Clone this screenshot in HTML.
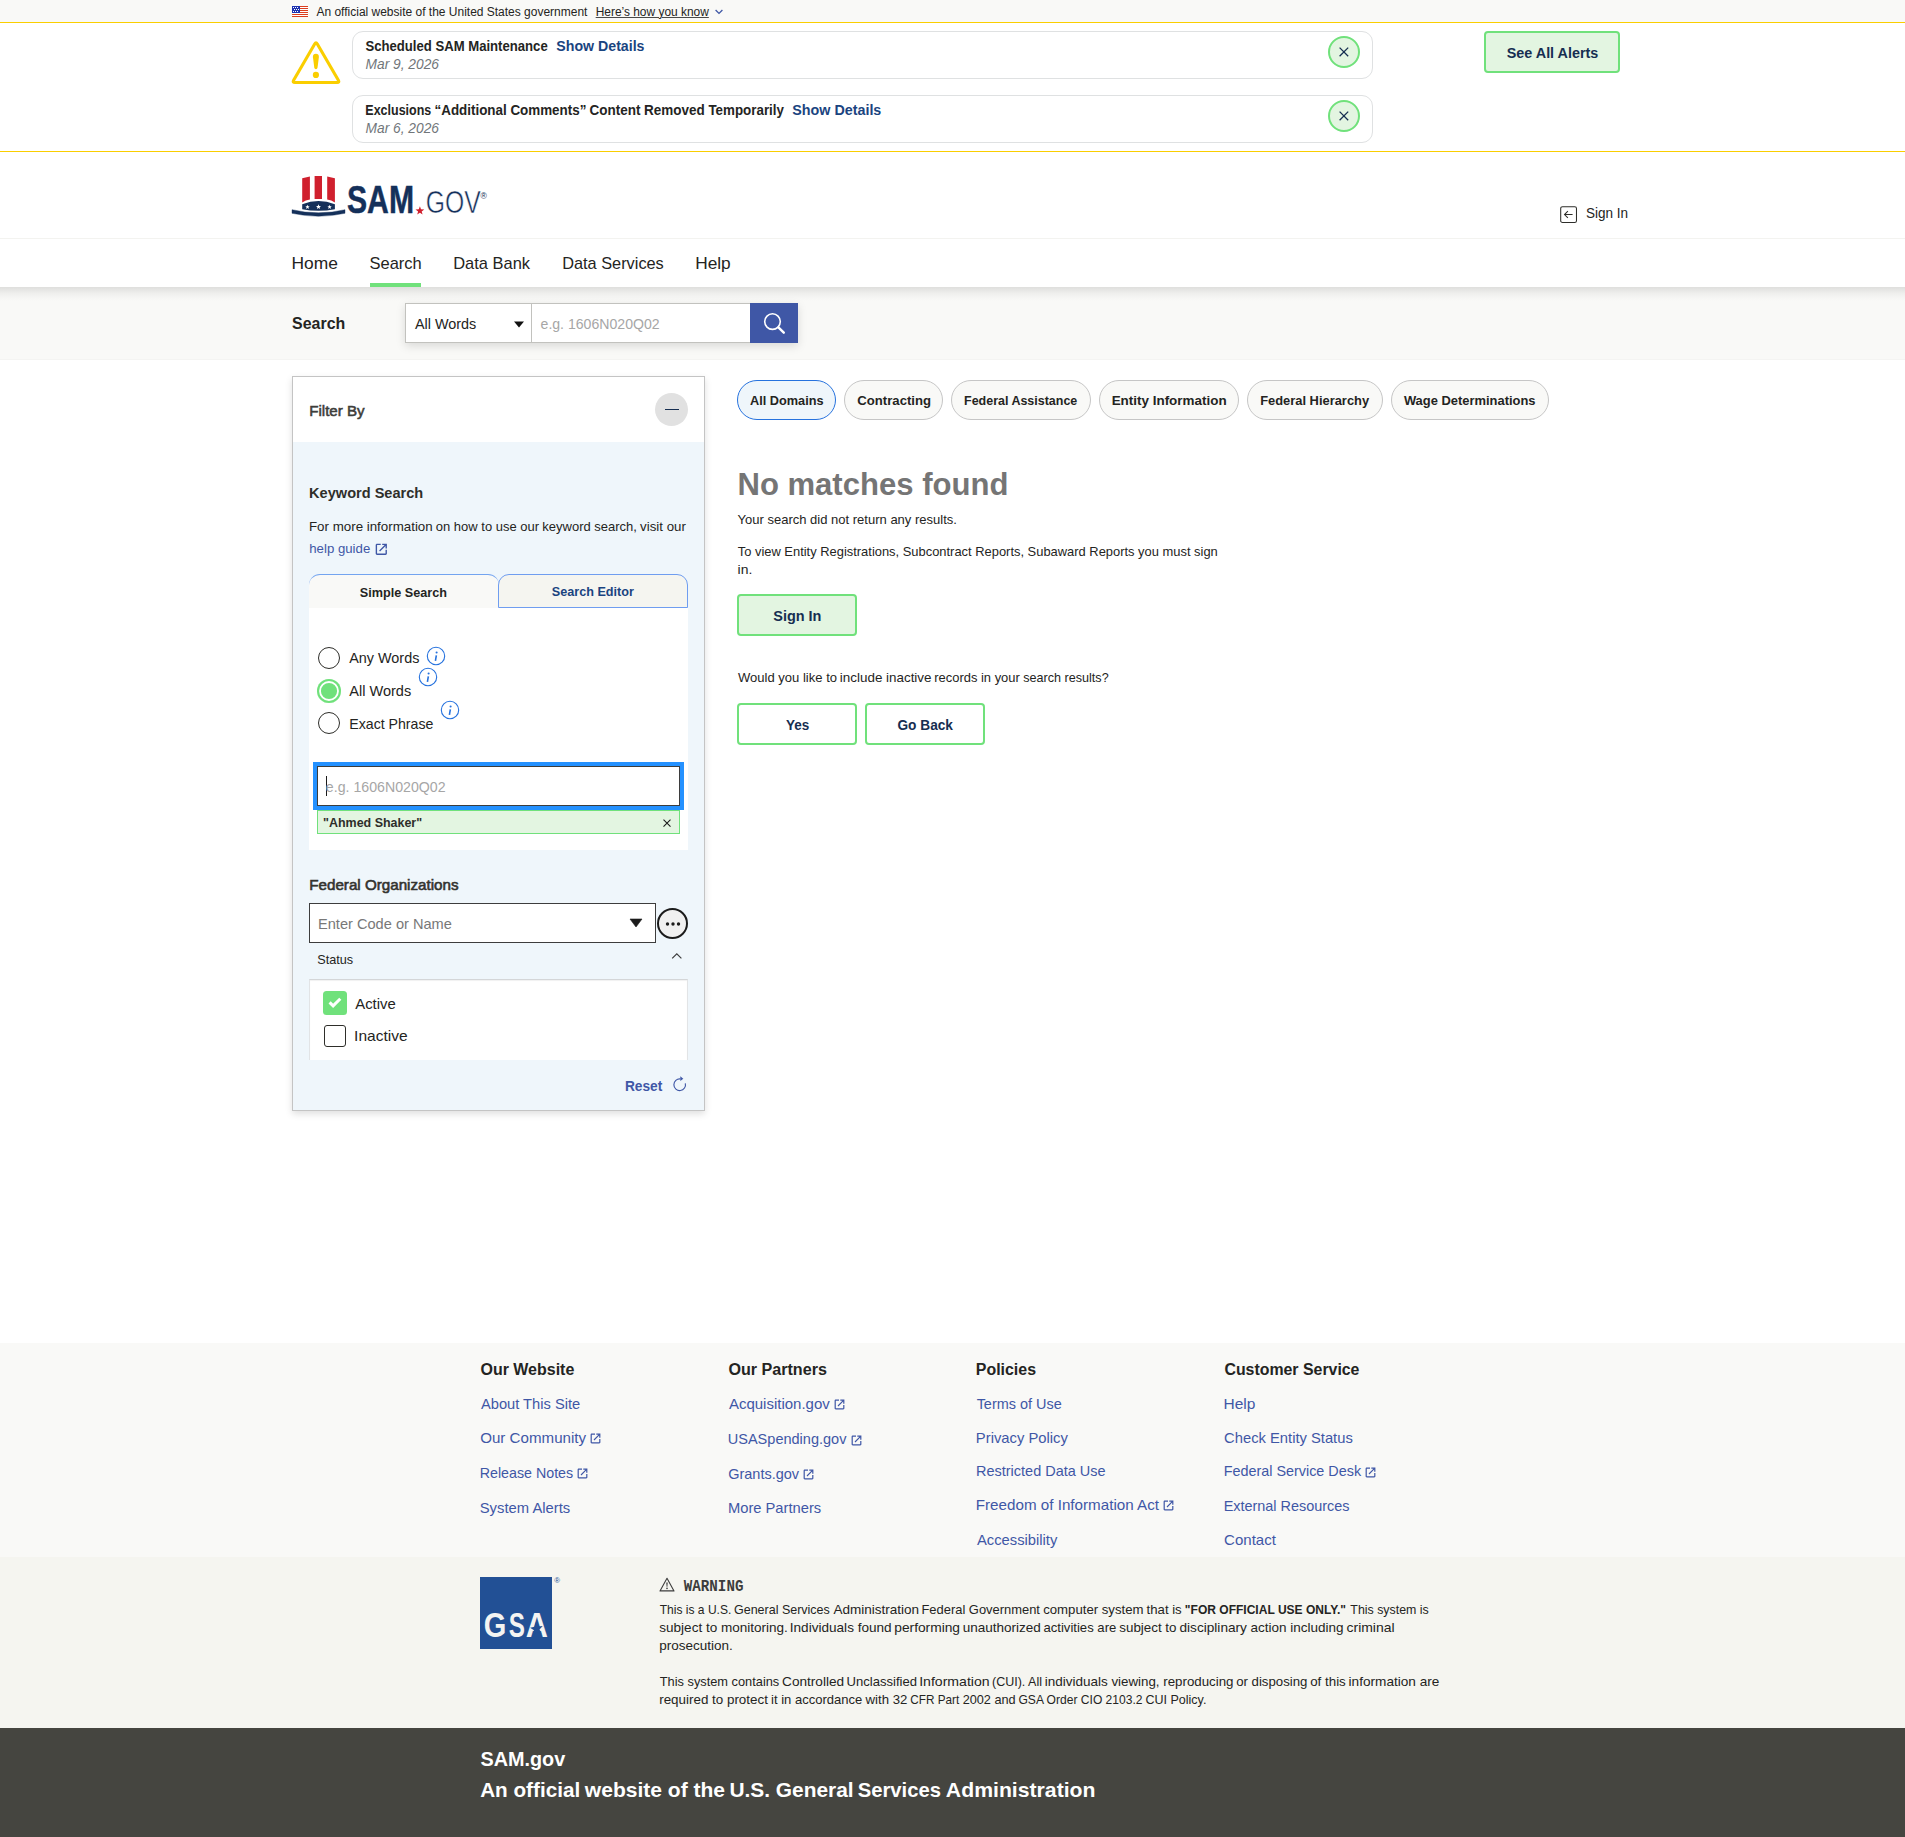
<!DOCTYPE html>
<html lang="en">
<head>
<meta charset="utf-8">
<title>SAM.gov | Search</title>
<meta name="viewport" content="width=1905">
<style>
html,body{margin:0;padding:0;background:#fff;}
body{width:1905px;height:1837px;overflow:hidden;position:relative;font-family:"Liberation Sans",sans-serif;color:#242422;}
#page{position:absolute;left:0;top:0;width:1905px;height:1837px;overflow:hidden;background:#fff;}
#page section,#page header,#page nav,#page form,#page aside,#page main,#page footer{display:block;margin:0;padding:0;border:0;}
#page .ln{display:block;margin:0;padding:0;font-weight:400;}
#page div,#page svg,#page .t{position:absolute;box-sizing:border-box;display:block;margin:0;padding:0;}
#page svg{overflow:visible;}
.t{white-space:nowrap;line-height:1;transform-origin:0 0;font-family:"Liberation Sans",sans-serif;font-weight:400;font-style:normal;color:#242422;text-decoration:none;cursor:default;}
</style>
</head>
<body>
<div id="page">
<section class="usa-banner" aria-label="Official website of the United States government">
<div style="left:0px;top:0px;width:1905px;height:22px;background:#f9f9f7;"></div>
<svg style="left:292px;top:6px;shape-rendering:crispEdges;" width="16" height="11" viewBox="0 0 16 11" aria-hidden="true"><rect width="16" height="11" fill="#fff"/><rect y="0" width="16" height="1" fill="#db3e1f"/><rect y="2" width="16" height="1" fill="#db3e1f"/><rect y="4" width="16" height="1" fill="#db3e1f"/><rect y="6" width="16" height="1" fill="#db3e1f"/><rect y="8" width="16" height="1" fill="#db3e1f"/><rect y="10" width="16" height="1" fill="#db3e1f"/><rect width="8" height="7" fill="#1e33b1"/><rect x="1.1" y="1.2" width="0.8" height="0.8" fill="#fff"/><rect x="2.0" y="3.2" width="0.8" height="0.8" fill="#fff"/><rect x="1.1" y="5.2" width="0.8" height="0.8" fill="#fff"/><rect x="3.1" y="1.2" width="0.8" height="0.8" fill="#fff"/><rect x="4.0" y="3.2" width="0.8" height="0.8" fill="#fff"/><rect x="3.1" y="5.2" width="0.8" height="0.8" fill="#fff"/><rect x="5.1" y="1.2" width="0.8" height="0.8" fill="#fff"/><rect x="6.0" y="3.2" width="0.8" height="0.8" fill="#fff"/><rect x="5.1" y="5.2" width="0.8" height="0.8" fill="#fff"/></svg>
<svg style="left:714px;top:8.4px;" width="10" height="8" viewBox="0 0 10 8" aria-hidden="true"><path d="M1.6 2l3.4 3.4L8.4 2" fill="none" stroke="#3f57a6" stroke-width="1.3"/></svg>
<span class="t" style="left:316px;top:6px;font-size:12px;transform:translateX(0.47px) scaleX(0.9987);">An official website of the United States government</span>
<a href="#" class="t" style="left:595px;top:6px;font-size:12px;text-decoration:underline;text-underline-offset:1px;text-decoration-thickness:1px;text-decoration-color:#4a4a48;transform:translateX(0.67px) scaleX(0.9940);">Here’s how you know</a>
</section>
<section class="alerts" aria-label="System alerts">
<div style="left:0px;top:22px;width:1905px;height:130px;background:#fff;border-top:1px solid #face00;border-bottom:1px solid #face00;"></div>
<svg style="left:292px;top:40px;" width="48" height="46" viewBox="0 0 48 46" aria-hidden="true"><path d="M22.69 4 Q24 1.75 25.31 4 L46.39 40.2 Q47.7 42.45 45.1 42.45 L2.9 42.45 Q0.3 42.45 1.61 40.2 Z" fill="none" stroke="#face00" stroke-width="3.1" stroke-linejoin="round"/><path d="M20.9 17 Q20.9 13.8 23.9 13.8 Q26.9 13.8 26.9 17 L25.5 27.8 Q25.3 29.2 23.9 29.2 Q22.5 29.2 22.3 27.8 Z" fill="#face00"/><circle cx="23.9" cy="34.9" r="3.1" fill="#face00"/></svg>
<div style="left:352px;top:31px;width:1021px;height:48px;border:1px solid #dfe1e2;border-radius:11px;background:#fff;"></div>
<div style="left:1328px;top:36px;width:32px;height:32px;border:2px solid #70e17b;border-radius:50%;background:#e3f5e1;"></div>
<svg style="left:1336px;top:44px;" width="16" height="16" viewBox="0 0 16 16" aria-hidden="true"><path d="M3.6 3.6l8.6 8.6M12.2 3.6l-8.6 8.6" stroke="#162e51" stroke-width="1.3" fill="none"/></svg>
<div style="left:352px;top:95px;width:1021px;height:48px;border:1px solid #dfe1e2;border-radius:11px;background:#fff;"></div>
<div style="left:1328px;top:100px;width:32px;height:32px;border:2px solid #70e17b;border-radius:50%;background:#e3f5e1;"></div>
<svg style="left:1336px;top:108px;" width="16" height="16" viewBox="0 0 16 16" aria-hidden="true"><path d="M3.6 3.6l8.6 8.6M12.2 3.6l-8.6 8.6" stroke="#162e51" stroke-width="1.3" fill="none"/></svg>
<div style="left:1484px;top:31px;width:136px;height:42px;border:2px solid #70e17b;border-radius:4px;background:#e3f5e1;"></div>
<strong class="t" style="left:365px;top:38px;font-size:15px;font-weight:700;transform:translateX(0.40px) scaleX(0.8749);">Scheduled SAM Maintenance</strong>
<a href="#" class="t" style="left:556px;top:38px;font-size:15px;font-weight:700;color:#1a4480;transform:translateX(0.31px) scaleX(0.9444);">Show Details</a>
<em class="t" style="left:365px;top:56px;font-size:15px;font-style:italic;color:#71767a;transform:translateX(0.55px) scaleX(0.9172);">Mar 9, 2026</em>
<strong class="ln">
<span class="t" style="left:365px;top:102px;font-size:15px;font-weight:700;transform:translateX(0.36px) scaleX(0.8313);">Exclusions</span>
<span class="t" style="left:434px;top:102px;font-size:15px;font-weight:700;transform:translateX(0.51px) scaleX(0.8931);">“Additional Comments”</span>
<span class="t" style="left:589px;top:102px;font-size:15px;font-weight:700;transform:translateX(0.45px) scaleX(0.8989);">Content Removed</span>
<span class="t" style="left:708px;top:102px;font-size:15px;font-weight:700;transform:translateX(0.45px) scaleX(0.8907);">Temporarily</span>
</strong>
<a href="#" class="t" style="left:792px;top:102px;font-size:15px;font-weight:700;color:#1a4480;transform:translateX(0.31px) scaleX(0.9533);">Show Details</a>
<em class="t" style="left:365px;top:120px;font-size:15px;font-style:italic;color:#71767a;transform:translateX(0.55px) scaleX(0.9172);">Mar 6, 2026</em>
<b class="t" style="left:1506px;top:45px;font-size:15px;font-weight:700;color:#162e51;transform:translateX(0.73px) scaleX(0.9579);">See All Alerts</b>
</section>
<header class="site-header">
<div style="left:0px;top:238px;width:1905px;height:1px;background:#f3f3f0;"></div>
<svg style="left:290px;top:174px" width="200" height="44" viewBox="290 174 200 44" role="img" aria-label="SAM.gov">
<path d="M302.2 178.2 L309.9 176.6 V199.6 Q305.6 200.4 302.2 202.4 Z" fill="#d0202e"/>
<path d="M314.6 176 H322 V199 Q318.3 198.8 314.6 199 Z" fill="#d0202e"/>
<path d="M327.2 176.6 L334.9 178.2 V202.4 Q331.5 200.4 327.2 199.6 Z" fill="#d0202e"/>
<path d="M302.2 204.2 Q318.5 197.6 334.9 204.2 V209.2 Q318.5 212.2 302.2 209.2 Z" fill="#14305a"/>
<path d="M292 209.7 Q318.5 216 345 209.7 V213.3 Q318.5 219.2 292 213.3 Z" fill="#14305a" stroke="#14305a" stroke-width="0.4" stroke-linejoin="round"/>
<g fill="#fff">
<path d="M307.5 204.7l.6 1.5 1.6.1-1.2 1 .4 1.6-1.4-.9-1.4.9.4-1.6-1.2-1 1.6-.1z"/>
<path d="M318.5 204.3l.7 1.7 1.8.1-1.4 1.1.5 1.8-1.6-1-1.6 1 .5-1.8-1.4-1.1 1.8-.1z"/>
<path d="M329.6 204.7l.6 1.5 1.6.1-1.2 1 .4 1.6-1.4-.9-1.4.9.4-1.6-1.2-1 1.6-.1z"/>
</g>
<text x="347" y="212.9" font-family="'Liberation Sans', sans-serif" font-weight="700" font-size="39.2" fill="#14305a" stroke="#14305a" stroke-width="0.5" textLength="67" lengthAdjust="spacingAndGlyphs">SAM</text>
<path d="M419.9 206.2l1.1 3.1 3.3.1-2.6 2 .9 3.2-2.7-1.9-2.7 1.9.9-3.2-2.6-2 3.3-.1z" fill="#d0202e"/>
<text x="425.8" y="212.9" font-family="'Liberation Sans', sans-serif" font-weight="400" font-size="31" fill="#14305a" stroke="#fff" stroke-width="0.55" textLength="55" lengthAdjust="spacingAndGlyphs">GOV</text>
<text x="480.5" y="199.1" font-family="'Liberation Sans', sans-serif" font-size="8.6" fill="#14305a">®</text>
</svg>
<svg style="left:1560px;top:206px;" width="17.2" height="17.2" viewBox="0 0 17.2 17.2" aria-hidden="true"><rect x="0.7" y="0.7" width="15.8" height="15.8" rx="1.8" fill="none" stroke="#2e2e2a" stroke-width="1.05"/><path d="M12.6 8.6H4.6M7.9 5.2L4.5 8.6l3.4 3.4" fill="none" stroke="#2e2e2a" stroke-width="1.05"/></svg>
<a href="#" class="t" style="left:1585px;top:205px;font-size:15px;transform:translateX(0.90px) scaleX(0.9000);">Sign In</a>
</header>
<nav class="primary-nav" aria-label="Primary navigation">
<div style="left:370px;top:283px;width:51px;height:4px;background:#70e17b;"></div>
<a href="#" class="t" style="left:291px;top:255px;font-size:17px;transform:translateX(0.43px) scaleX(1.0227);">Home</a>
<a href="#" class="t" style="left:369px;top:255px;font-size:17px;transform:translateX(0.52px) scaleX(0.9701);">Search</a>
<a href="#" class="t" style="left:453px;top:255px;font-size:17px;transform:translateX(0.19px) scaleX(0.9679);">Data Bank</a>
<a href="#" class="t" style="left:562px;top:255px;font-size:17px;transform:translateX(0.23px) scaleX(0.9596);">Data Services</a>
<a href="#" class="t" style="left:695px;top:255px;font-size:17px;transform:translateX(0.18px) scaleX(1.0166);">Help</a>
</nav>
<form class="search-bar" role="search">
<div style="left:0px;top:287px;width:1905px;height:73px;background:#f9f9f7;border-bottom:1px solid #f4f4f2;"></div>
<div style="left:0px;top:287px;width:1905px;height:14px;background:linear-gradient(rgba(0,0,0,.105),rgba(0,0,0,.085) 15%,rgba(0,0,0,.045) 45%,rgba(0,0,0,.015) 75%,rgba(0,0,0,0));"></div>
<div style="left:405px;top:303px;width:393px;height:40px;box-shadow:0 3px 9px rgba(0,0,0,.13);background:#fff;"></div>
<div style="left:405px;top:303px;width:127px;height:40px;border:1px solid #c2c2be;background:#fff;"></div>
<div style="left:531px;top:303px;width:220px;height:40px;border:1px solid #c2c2be;background:#fff;"></div>
<svg style="left:513px;top:320px;" width="12" height="9" viewBox="0 0 12 9" aria-hidden="true"><path d="M1 1.4h10L6 7.4z" fill="#111"/></svg>
<div style="left:750px;top:303px;width:48px;height:40px;background:#3f57a6;"></div>
<svg style="left:762px;top:312px;" width="24" height="24" viewBox="0 0 24 24" aria-hidden="true"><circle cx="10.5" cy="9.6" r="7.8" fill="none" stroke="#fff" stroke-width="1.6"/><path d="M16.4 15.4l5.4 5.3" stroke="#fff" stroke-width="2.4" stroke-linecap="round" fill="none"/></svg>
<span class="t" style="left:292px;top:315px;font-size:17px;font-weight:700;transform:translateX(0.11px) scaleX(0.9365);">Search</span>
<label class="t" style="left:414px;top:316px;font-size:15px;transform:translateX(0.93px) scaleX(0.9597);">All Words</label>
<span class="t" style="left:540px;top:316px;font-size:15px;color:#a6a6a6;transform:translateX(0.54px) scaleX(0.9392);">e.g. 1606N020Q02</span>
</form>
<aside class="filter-panel" aria-label="Filter By">
<div style="left:292px;top:376px;width:413px;height:735px;border:1px solid #c4c4c4;background:#eff6fb;box-shadow:0 3px 7px rgba(0,0,0,.13);"></div>
<div style="left:293px;top:377px;width:411px;height:65px;background:#fff;"></div>
<div style="left:655px;top:393px;width:33px;height:33px;border-radius:50%;background:#e1e1e1;"></div>
<div style="left:665px;top:409px;width:14px;height:1.3px;background:#162e51;"></div>
<svg style="left:375.2px;top:542.6px;" width="12.6" height="12.6" viewBox="0 0 11 11" aria-hidden="true"><path d="M9.2 9.2H1.8V1.8H5V0.6H1.8C1.1 0.6 0.6 1.1 0.6 1.8v7.4c0 .7.5 1.2 1.2 1.2h7.4c.7 0 1.2-.5 1.2-1.2V6H9.2v3.2z" fill="#3f57a6"/><path d="M6.3 0.6v1.2h2.1L3.6 6.6l.8.8 4.8-4.8v2.1h1.2V0.6H6.3z" fill="#3f57a6"/></svg>
<div style="left:309px;top:574px;width:190px;height:34px;background:#f9f9f7;border-top:1px solid #73a4f0;border-radius:11px 11px 0 0;"></div>
<div style="left:498px;top:574px;width:190px;height:34px;background:#f5f5f0;border:1px solid #6f9df0;border-radius:11px 11px 0 0;"></div>
<div style="left:309px;top:608px;width:379px;height:242px;background:#fff;"></div>
<div style="left:318px;top:647px;width:22px;height:22px;border-radius:50%;background:#fff;border:1.5px solid #2e2e2a;"></div>
<div style="left:317px;top:679px;width:24px;height:24px;border-radius:50%;background:#70e17b;box-shadow:inset 0 0 0 2.1px #70e17b, inset 0 0 0 3.9px #fff;"></div>
<div style="left:318px;top:712px;width:22px;height:22px;border-radius:50%;background:#fff;border:1.5px solid #2e2e2a;"></div>
<svg style="left:426.2px;top:646px;" width="20" height="20" viewBox="0 0 20 20" aria-hidden="true"><circle cx="10" cy="10" r="8.7" fill="none" stroke="#2672de" stroke-width="1.1"/><circle cx="10.6" cy="6.5" r="1.05" fill="#2672de"/><path d="M10.35 9.3L9.4 14.8" fill="none" stroke="#2672de" stroke-width="1.6"/></svg>
<svg style="left:418.2px;top:667px;" width="20" height="20" viewBox="0 0 20 20" aria-hidden="true"><circle cx="10" cy="10" r="8.7" fill="none" stroke="#2672de" stroke-width="1.1"/><circle cx="10.6" cy="6.5" r="1.05" fill="#2672de"/><path d="M10.35 9.3L9.4 14.8" fill="none" stroke="#2672de" stroke-width="1.6"/></svg>
<svg style="left:440.2px;top:700.4px;" width="20" height="20" viewBox="0 0 20 20" aria-hidden="true"><circle cx="10" cy="10" r="8.7" fill="none" stroke="#2672de" stroke-width="1.1"/><circle cx="10.6" cy="6.5" r="1.05" fill="#2672de"/><path d="M10.35 9.3L9.4 14.8" fill="none" stroke="#2672de" stroke-width="1.6"/></svg>
<div style="left:313px;top:762px;width:371px;height:48px;background:#2491ff;"></div>
<div style="left:317px;top:766px;width:363px;height:40px;background:#fff;border:1px solid #3d3d3d;"></div>
<div style="left:326px;top:776px;width:1px;height:20px;background:#1b1b1b;"></div>
<div style="left:317px;top:810px;width:363px;height:24px;background:#e3f5e1;border:1px solid #70e17b;"></div>
<svg style="left:661px;top:817px;" width="12" height="12" viewBox="0 0 12 12" aria-hidden="true"><path d="M2.5 2.6l7 7M9.5 2.6l-7 7" stroke="#1b1b1b" stroke-width="1.1" fill="none"/></svg>
<div style="left:309px;top:903px;width:347px;height:40px;background:#fff;border:1px solid #3d3d3d;"></div>
<svg style="left:629px;top:918px;" width="14" height="10" viewBox="0 0 14 10" aria-hidden="true"><path d="M1 1h12L7 9z" fill="#1b1b1b" stroke="#1b1b1b" stroke-width="0.6" stroke-linejoin="round"/></svg>
<div style="left:657px;top:907.5px;width:31px;height:31px;border-radius:50%;background:#f0f0f0;border:2px solid #1b1b1b;"></div>
<svg style="left:664px;top:920px;" width="18" height="8" viewBox="0 0 18 8" aria-hidden="true"><circle cx="3.5" cy="4" r="1.7" fill="#1b1b1b"/><circle cx="9" cy="4" r="1.7" fill="#1b1b1b"/><circle cx="14.5" cy="4" r="1.7" fill="#1b1b1b"/></svg>
<svg style="left:670px;top:950px;" width="14" height="11" viewBox="0 0 14 11" aria-hidden="true"><path d="M2.2 8.4l4.6-4.6 4.6 4.6" fill="none" stroke="#3d3d3d" stroke-width="1.2"/></svg>
<div style="left:309px;top:979px;width:379px;height:81px;background:#fff;border:1px solid #e2e4e6;border-top-color:#d4d6d8;border-bottom:0;box-shadow:inset 0 1px 1px rgba(0,0,0,.06);"></div>
<div style="left:323px;top:991px;width:24px;height:24px;background:#70e17b;border-radius:3.5px;"></div>
<svg style="left:323px;top:991px;" width="24" height="24" viewBox="0 0 24 24" aria-hidden="true"><path d="M6.6 11.4l3.5 3.5 7.2-7.2" fill="none" stroke="#fff" stroke-width="3"/></svg>
<div style="left:324px;top:1025px;width:22px;height:22px;background:#fff;border:1.5px solid #2e2e2a;border-radius:3px;"></div>
<svg style="left:672px;top:1076px;" width="16" height="16" viewBox="0 0 16 16" aria-hidden="true"><path d="M13.3 7.3A5.8 5.8 0 1 1 8.4 3" fill="none" stroke="#3f57a6" stroke-width="1.15"/><path d="M8.3 0.2l3 2.5-3 2.4z" fill="#3f57a6"/></svg>
<h2 class="t" style="left:309px;top:403px;font-size:15px;color:#3d3d3a;-webkit-text-stroke:0.55px #3d3d3a;transform:translateX(0.18px) scaleX(1.0090);">Filter By</h2>
<h2 class="t" style="left:309px;top:485px;font-size:15px;font-weight:700;color:#2e2e2a;transform:translateX(0.11px) scaleX(0.9705);">Keyword Search</h2>
<p class="ln">
<span class="t" style="left:308px;top:520px;font-size:13.3px;transform:translateX(0.97px) scaleX(1.0026);">For more information</span>
<span class="t" style="left:435px;top:520px;font-size:13.3px;transform:translateX(0.82px) scaleX(0.9764);">on how to use our</span>
<span class="t" style="left:542px;top:520px;font-size:13.3px;transform:translateX(0.33px) scaleX(0.9775);">keyword search,</span>
<span class="t" style="left:640px;top:520px;font-size:13.3px;transform:translateX(0.12px) scaleX(0.9975);">visit our</span>
</p>
<a href="#" class="t" style="left:309px;top:542px;font-size:13.3px;color:#3f57a6;transform:translateX(0.25px) scaleX(0.9936);">help guide</a>
<b class="t" style="left:359px;top:586px;font-size:13.6px;font-weight:700;transform:translateX(0.77px) scaleX(0.9299);">Simple Search</b>
<b class="t" style="left:551px;top:585px;font-size:13.6px;font-weight:700;color:#1a4480;transform:translateX(0.77px) scaleX(0.9293);">Search Editor</b>
<label class="t" style="left:349px;top:650px;font-size:15px;transform:translateX(0.26px) scaleX(0.9587);">Any Words</label>
<label class="t" style="left:349px;top:683px;font-size:15px;transform:translateX(0.26px) scaleX(0.9689);">All Words</label>
<label class="t" style="left:349px;top:716px;font-size:15px;transform:translateX(0.27px) scaleX(0.9429);">Exact Phrase</label>
<span class="t" style="left:325px;top:779px;font-size:15px;color:#a6a6a6;transform:translateX(0.82px) scaleX(0.9448);">e.g. 1606N020Q02</span>
<span class="t" style="left:323px;top:816px;font-size:13.6px;font-weight:700;color:#2e2e2a;transform:translateX(0.02px) scaleX(0.9169);">"Ahmed Shaker"</span>
<h2 class="t" style="left:309px;top:877px;font-size:15px;color:#33332f;-webkit-text-stroke:0.6px #33332f;transform:translateX(0.25px) scaleX(1.0115);">Federal Organizations</h2>
<span class="t" style="left:317px;top:916px;font-size:15px;color:#787878;transform:translateX(0.98px) scaleX(0.9733);">Enter Code or Name</span>
<label class="t" style="left:317px;top:953px;font-size:13.3px;transform:translateX(0.29px) scaleX(0.9526);">Status</label>
<label class="t" style="left:355px;top:996px;font-size:15px;transform:translateX(0.25px) scaleX(0.9917);">Active</label>
<label class="t" style="left:354px;top:1028px;font-size:15px;transform:translateX(0.11px) scaleX(1.0349);">Inactive</label>
<a href="#" class="t" style="left:624px;top:1078px;font-size:15px;font-weight:700;color:#3f57a6;transform:translateX(0.90px) scaleX(0.9164);">Reset</a>
</aside>
<main class="results">
<div style="left:737px;top:380px;width:99px;height:40px;border:1px solid #2672de;background:#eff6fb;border-radius:20px;"></div>
<div style="left:844px;top:380px;width:99px;height:40px;border:1px solid #c6c6c6;background:#f9f9f7;border-radius:20px;"></div>
<div style="left:951px;top:380px;width:140px;height:40px;border:1px solid #c6c6c6;background:#f9f9f7;border-radius:20px;"></div>
<div style="left:1099px;top:380px;width:140px;height:40px;border:1px solid #c6c6c6;background:#f9f9f7;border-radius:20px;"></div>
<div style="left:1247px;top:380px;width:136px;height:40px;border:1px solid #c6c6c6;background:#f9f9f7;border-radius:20px;"></div>
<div style="left:1391px;top:380px;width:158px;height:40px;border:1px solid #c6c6c6;background:#f9f9f7;border-radius:20px;"></div>
<div style="left:737px;top:594px;width:120px;height:42px;border:2px solid #70e17b;border-radius:4px;background:#e3f5e1;"></div>
<div style="left:737px;top:703px;width:120px;height:42px;border:2px solid #70e17b;border-radius:4px;background:#fff;"></div>
<div style="left:865px;top:703px;width:120px;height:42px;border:2px solid #70e17b;border-radius:4px;background:#fff;"></div>
<a href="#" class="t" style="left:750px;top:394px;font-size:13.5px;font-weight:700;transform:translateX(0.00px) scaleX(0.9424);">All Domains</a>
<a href="#" class="t" style="left:857px;top:394px;font-size:13.5px;font-weight:700;transform:translateX(0.32px) scaleX(0.9729);">Contracting</a>
<a href="#" class="t" style="left:964px;top:394px;font-size:13.5px;font-weight:700;transform:translateX(0.04px) scaleX(0.9242);">Federal Assistance</a>
<a href="#" class="t" style="left:1111px;top:394px;font-size:13.5px;font-weight:700;transform:translateX(0.64px) scaleX(0.9953);">Entity Information</a>
<a href="#" class="t" style="left:1260px;top:394px;font-size:13.5px;font-weight:700;transform:translateX(0.16px) scaleX(0.9551);">Federal Hierarchy</a>
<a href="#" class="t" style="left:1403px;top:394px;font-size:13.5px;font-weight:700;transform:translateX(0.88px) scaleX(0.9572);">Wage Determinations</a>
<h1 class="t" style="left:737px;top:468px;font-size:32px;font-weight:700;color:#757575;transform:translateX(0.46px) scaleX(0.9705);">No matches found</h1>
<p class="t" style="left:737px;top:513px;font-size:13.5px;transform:translateX(0.55px) scaleX(0.9636);">Your search did not return any results.</p>
<p class="t" style="left:737px;top:545px;font-size:13.5px;transform:translateX(0.71px) scaleX(0.9563);">To view Entity Registrations, Subcontract Reports, Subaward Reports you must sign</p>
<span class="t" style="left:737px;top:563px;font-size:13.5px;transform:translateX(0.59px) scaleX(1.0332);">in.</span>
<b class="t" style="left:773px;top:608px;font-size:15px;font-weight:700;color:#162e51;transform:translateX(0.27px) scaleX(0.9634);">Sign In</b>
<p class="ln">
<span class="t" style="left:737px;top:671px;font-size:13.5px;transform:translateX(0.98px) scaleX(0.9659);">Would you like to</span>
<span class="t" style="left:839px;top:671px;font-size:13.5px;transform:translateX(0.85px) scaleX(0.9930);">include inactive</span>
<span class="t" style="left:934px;top:671px;font-size:13.5px;transform:translateX(0.28px) scaleX(0.9577);">records in your</span>
<span class="t" style="left:1023px;top:671px;font-size:13.5px;transform:translateX(0.32px) scaleX(0.9322);">search results?</span>
</p>
<b class="t" style="left:786px;top:717px;font-size:15px;font-weight:700;color:#162e51;transform:translateX(0.00px) scaleX(0.9000);">Yes</b>
<b class="t" style="left:897px;top:717px;font-size:15px;font-weight:700;color:#162e51;transform:translateX(0.45px) scaleX(0.9120);">Go Back</b>
</main>
<footer class="site-footer">
<div style="left:0px;top:1343px;width:1905px;height:214px;background:#f9f9f7;"></div>
<div style="left:0px;top:1557px;width:1905px;height:171px;background:#f5f5f0;"></div>
<div style="left:0px;top:1728px;width:1905px;height:109px;background:#454540;"></div>
<svg style="left:590.2px;top:1432.6px;" width="11" height="11" viewBox="0 0 11 11" aria-hidden="true"><path d="M9.2 9.2H1.8V1.8H5V0.6H1.8C1.1 0.6 0.6 1.1 0.6 1.8v7.4c0 .7.5 1.2 1.2 1.2h7.4c.7 0 1.2-.5 1.2-1.2V6H9.2v3.2z" fill="#3f57a6"/><path d="M6.3 0.6v1.2h2.1L3.6 6.6l.8.8 4.8-4.8v2.1h1.2V0.6H6.3z" fill="#3f57a6"/></svg>
<svg style="left:576.6px;top:1467.6px;" width="11" height="11" viewBox="0 0 11 11" aria-hidden="true"><path d="M9.2 9.2H1.8V1.8H5V0.6H1.8C1.1 0.6 0.6 1.1 0.6 1.8v7.4c0 .7.5 1.2 1.2 1.2h7.4c.7 0 1.2-.5 1.2-1.2V6H9.2v3.2z" fill="#3f57a6"/><path d="M6.3 0.6v1.2h2.1L3.6 6.6l.8.8 4.8-4.8v2.1h1.2V0.6H6.3z" fill="#3f57a6"/></svg>
<svg style="left:834.2px;top:1398.8px;" width="11" height="11" viewBox="0 0 11 11" aria-hidden="true"><path d="M9.2 9.2H1.8V1.8H5V0.6H1.8C1.1 0.6 0.6 1.1 0.6 1.8v7.4c0 .7.5 1.2 1.2 1.2h7.4c.7 0 1.2-.5 1.2-1.2V6H9.2v3.2z" fill="#3f57a6"/><path d="M6.3 0.6v1.2h2.1L3.6 6.6l.8.8 4.8-4.8v2.1h1.2V0.6H6.3z" fill="#3f57a6"/></svg>
<svg style="left:850.8px;top:1434.6px;" width="11" height="11" viewBox="0 0 11 11" aria-hidden="true"><path d="M9.2 9.2H1.8V1.8H5V0.6H1.8C1.1 0.6 0.6 1.1 0.6 1.8v7.4c0 .7.5 1.2 1.2 1.2h7.4c.7 0 1.2-.5 1.2-1.2V6H9.2v3.2z" fill="#3f57a6"/><path d="M6.3 0.6v1.2h2.1L3.6 6.6l.8.8 4.8-4.8v2.1h1.2V0.6H6.3z" fill="#3f57a6"/></svg>
<svg style="left:803.2px;top:1469.4px;" width="11" height="11" viewBox="0 0 11 11" aria-hidden="true"><path d="M9.2 9.2H1.8V1.8H5V0.6H1.8C1.1 0.6 0.6 1.1 0.6 1.8v7.4c0 .7.5 1.2 1.2 1.2h7.4c.7 0 1.2-.5 1.2-1.2V6H9.2v3.2z" fill="#3f57a6"/><path d="M6.3 0.6v1.2h2.1L3.6 6.6l.8.8 4.8-4.8v2.1h1.2V0.6H6.3z" fill="#3f57a6"/></svg>
<svg style="left:1162.6px;top:1500.2px;" width="11" height="11" viewBox="0 0 11 11" aria-hidden="true"><path d="M9.2 9.2H1.8V1.8H5V0.6H1.8C1.1 0.6 0.6 1.1 0.6 1.8v7.4c0 .7.5 1.2 1.2 1.2h7.4c.7 0 1.2-.5 1.2-1.2V6H9.2v3.2z" fill="#3f57a6"/><path d="M6.3 0.6v1.2h2.1L3.6 6.6l.8.8 4.8-4.8v2.1h1.2V0.6H6.3z" fill="#3f57a6"/></svg>
<svg style="left:1364.6px;top:1466.6px;" width="11" height="11" viewBox="0 0 11 11" aria-hidden="true"><path d="M9.2 9.2H1.8V1.8H5V0.6H1.8C1.1 0.6 0.6 1.1 0.6 1.8v7.4c0 .7.5 1.2 1.2 1.2h7.4c.7 0 1.2-.5 1.2-1.2V6H9.2v3.2z" fill="#3f57a6"/><path d="M6.3 0.6v1.2h2.1L3.6 6.6l.8.8 4.8-4.8v2.1h1.2V0.6H6.3z" fill="#3f57a6"/></svg>
<svg style="left:659px;top:1577.4px;" width="16" height="15" viewBox="0 0 16 15" aria-hidden="true"><path d="M8 1.3l7 12.6H1z" fill="none" stroke="#3d3d3d" stroke-width="1.1" stroke-linejoin="round"/><path d="M7.3 5.6h1.4l-.3 4.2h-.8z" fill="#3d3d3d"/><circle cx="8" cy="11.4" r=".8" fill="#3d3d3d"/></svg>
<svg style="left:480px;top:1576px" width="82" height="74" viewBox="480 1576 82 74" role="img" aria-label="GSA">
<rect x="480" y="1577" width="72" height="72" fill="#225095"/>
<g font-family="'Liberation Sans', sans-serif" font-weight="700" font-size="34.6" fill="#f4f4f2">
<text y="1637"><tspan x="483.7" textLength="22.6" lengthAdjust="spacingAndGlyphs">G</tspan><tspan x="508.7" textLength="16.2" lengthAdjust="spacingAndGlyphs">S</tspan><tspan x="525.8" textLength="22.2" lengthAdjust="spacingAndGlyphs">A</tspan></text>
</g>
<path d="M536.6 1622.2l1.7 4.4 4.7.3-3.6 3 1.2 4.6-4-2.5-4 2.5 1.2-4.6-3.6-3 4.7-.3z" fill="#225095" transform="rotate(-8 536.6 1628.6)"/>
<text x="554.2" y="1583.2" font-family="'Liberation Sans', sans-serif" font-size="7.8" fill="#225095">®</text>
</svg>
<h3 class="t" style="left:480px;top:1362px;font-size:16px;font-weight:700;transform:translateX(0.45px) scaleX(0.9993);">Our Website</h3>
<h3 class="t" style="left:728px;top:1362px;font-size:16px;font-weight:700;transform:translateX(0.45px) scaleX(1.0060);">Our Partners</h3>
<h3 class="t" style="left:975px;top:1362px;font-size:16px;font-weight:700;transform:translateX(0.82px) scaleX(0.9948);">Policies</h3>
<h3 class="t" style="left:1224px;top:1362px;font-size:16px;font-weight:700;transform:translateX(0.45px) scaleX(0.9922);">Customer Service</h3>
<a href="#" class="t" style="left:480px;top:1396px;font-size:15px;color:#3f57a6;transform:translateX(0.93px) scaleX(0.9790);">About This Site</a>
<a href="#" class="t" style="left:480px;top:1430px;font-size:15px;color:#3f57a6;transform:translateX(0.20px) scaleX(1.0082);">Our Community</a>
<a href="#" class="t" style="left:479px;top:1465px;font-size:15px;color:#3f57a6;transform:translateX(0.66px) scaleX(0.9505);">Release Notes</a>
<a href="#" class="t" style="left:479px;top:1500px;font-size:15px;color:#3f57a6;transform:translateX(0.75px) scaleX(0.9866);">System Alerts</a>
<a href="#" class="t" style="left:728px;top:1396px;font-size:15px;color:#3f57a6;transform:translateX(0.91px) scaleX(1.0000);">Acquisition.gov</a>
<a href="#" class="t" style="left:727px;top:1431px;font-size:15px;color:#3f57a6;transform:translateX(0.76px) scaleX(0.9682);">USASpending.gov</a>
<a href="#" class="t" style="left:728px;top:1466px;font-size:15px;color:#3f57a6;transform:translateX(0.15px) scaleX(0.9667);">Grants.gov</a>
<a href="#" class="t" style="left:727px;top:1500px;font-size:15px;color:#3f57a6;transform:translateX(0.94px) scaleX(0.9811);">More Partners</a>
<a href="#" class="t" style="left:976px;top:1396px;font-size:15px;color:#3f57a6;transform:translateX(0.63px) scaleX(0.9628);">Terms of Use</a>
<a href="#" class="t" style="left:975px;top:1430px;font-size:15px;color:#3f57a6;transform:translateX(0.86px) scaleX(0.9854);">Privacy Policy</a>
<a href="#" class="t" style="left:976px;top:1463px;font-size:15px;color:#3f57a6;transform:translateX(0.01px) scaleX(0.9656);">Restricted Data Use</a>
<a href="#" class="t" style="left:975px;top:1497px;font-size:15px;color:#3f57a6;transform:translateX(0.77px) scaleX(1.0130);">Freedom of Information Act</a>
<a href="#" class="t" style="left:976px;top:1532px;font-size:15px;color:#3f57a6;transform:translateX(0.93px) scaleX(0.9844);">Accessibility</a>
<a href="#" class="t" style="left:1223px;top:1396px;font-size:15px;color:#3f57a6;transform:translateX(0.52px) scaleX(1.0324);">Help</a>
<a href="#" class="t" style="left:1224px;top:1430px;font-size:15px;color:#3f57a6;transform:translateX(0.11px) scaleX(0.9831);">Check Entity Status</a>
<a href="#" class="t" style="left:1223px;top:1463px;font-size:15px;color:#3f57a6;transform:translateX(0.66px) scaleX(0.9586);">Federal Service Desk</a>
<a href="#" class="t" style="left:1223px;top:1498px;font-size:15px;color:#3f57a6;transform:translateX(0.64px) scaleX(0.9619);">External Resources</a>
<a href="#" class="t" style="left:1224px;top:1532px;font-size:15px;color:#3f57a6;transform:translateX(0.11px) scaleX(1.0005);">Contact</a>
<h3 class="t" style="left:683px;top:1579px;font-size:16.5px;font-weight:700;color:#3d3d3d;font-family:'Liberation Mono', monospace;transform:translateX(0.83px) scaleX(0.8594);">WARNING</h3>
<p class="ln">
<span class="t" style="left:659px;top:1603px;font-size:13.3px;transform:translateX(0.78px) scaleX(0.9041);">This is a U.S.</span>
<span class="t" style="left:734px;top:1603px;font-size:13.3px;transform:translateX(0.02px) scaleX(0.9390);">General Services</span>
<span class="t" style="left:833px;top:1603px;font-size:13.3px;transform:translateX(0.42px) scaleX(1.0167);">Administration</span>
<span class="t" style="left:921px;top:1603px;font-size:13.3px;transform:translateX(0.45px) scaleX(0.9718);">Federal Government</span>
<span class="t" style="left:1043px;top:1603px;font-size:13.3px;transform:translateX(0.15px) scaleX(0.9913);">computer system</span>
<span class="t" style="left:1146px;top:1603px;font-size:13.3px;transform:translateX(0.58px) scaleX(0.9898);">that is</span>
<b class="t" style="left:1184px;top:1603px;font-size:13.3px;font-weight:700;transform:translateX(0.82px) scaleX(0.9050);">"FOR OFFICIAL USE ONLY."</b>
<span class="t" style="left:1350px;top:1603px;font-size:13.3px;transform:translateX(0.33px) scaleX(0.9303);">This system is</span>
</p>
<p class="ln">
<span class="t" style="left:659px;top:1621px;font-size:13.3px;transform:translateX(0.29px) scaleX(1.0173);">subject to monitoring.</span>
<span class="t" style="left:789px;top:1621px;font-size:13.3px;transform:translateX(0.78px) scaleX(1.0209);">Individuals found</span>
<span class="t" style="left:894px;top:1621px;font-size:13.3px;transform:translateX(0.25px) scaleX(1.0347);">performing</span>
<span class="t" style="left:962px;top:1621px;font-size:13.3px;transform:translateX(0.71px) scaleX(1.0162);">unauthorized</span>
<span class="t" style="left:1043px;top:1621px;font-size:13.3px;transform:translateX(0.47px) scaleX(0.9853);">activities are</span>
<span class="t" style="left:1119px;top:1621px;font-size:13.3px;transform:translateX(0.29px) scaleX(1.0054);">subject to</span>
<span class="t" style="left:1179px;top:1621px;font-size:13.3px;transform:translateX(0.53px) scaleX(1.0237);">disciplinary</span>
<span class="t" style="left:1250px;top:1621px;font-size:13.3px;transform:translateX(0.49px) scaleX(1.0146);">action including</span>
<span class="t" style="left:1346px;top:1621px;font-size:13.3px;transform:translateX(0.50px) scaleX(1.0501);">criminal</span>
</p>
<span class="t" style="left:659px;top:1639px;font-size:13.3px;transform:translateX(0.27px) scaleX(1.0154);">prosecution.</span>
<p class="ln">
<span class="t" style="left:659px;top:1675px;font-size:13.3px;transform:translateX(0.74px) scaleX(0.9626);">This system contains</span>
<span class="t" style="left:782px;top:1675px;font-size:13.3px;transform:translateX(0.10px) scaleX(1.0231);">Controlled</span>
<span class="t" style="left:846px;top:1675px;font-size:13.3px;transform:translateX(0.55px) scaleX(0.9827);">Unclassified</span>
<span class="t" style="left:919px;top:1675px;font-size:13.3px;transform:translateX(0.17px) scaleX(1.0587);">Information</span>
<span class="t" style="left:991px;top:1675px;font-size:13.3px;transform:translateX(0.98px) scaleX(0.9409);">(CUI). All</span>
<span class="t" style="left:1044px;top:1675px;font-size:13.3px;transform:translateX(0.64px) scaleX(1.0155);">individuals</span>
<span class="t" style="left:1111px;top:1675px;font-size:13.3px;transform:translateX(0.47px) scaleX(1.0005);">viewing, reproducing</span>
<span class="t" style="left:1236px;top:1675px;font-size:13.3px;transform:translateX(0.15px) scaleX(0.9945);">or disposing</span>
<span class="t" style="left:1310px;top:1675px;font-size:13.3px;transform:translateX(0.15px) scaleX(1.0040);">of this</span>
<span class="t" style="left:1348px;top:1675px;font-size:13.3px;transform:translateX(0.59px) scaleX(1.0235);">information are</span>
</p>
<p class="ln">
<span class="t" style="left:659px;top:1693px;font-size:13.3px;transform:translateX(0.20px) scaleX(1.0072);">required to protect</span>
<span class="t" style="left:771px;top:1693px;font-size:13.3px;transform:translateX(0.10px) scaleX(0.9794);">it in accordance</span>
<span class="t" style="left:865px;top:1693px;font-size:13.3px;transform:translateX(0.62px) scaleX(0.9898);">with 32</span>
<span class="t" style="left:910px;top:1693px;font-size:13.3px;transform:translateX(0.33px) scaleX(0.8823);">CFR Part</span>
<span class="t" style="left:962px;top:1693px;font-size:13.3px;transform:translateX(0.66px) scaleX(0.9562);">2002 and</span>
<span class="t" style="left:1018px;top:1693px;font-size:13.3px;transform:translateX(0.46px) scaleX(0.9068);">GSA Order</span>
<span class="t" style="left:1080px;top:1693px;font-size:13.3px;transform:translateX(0.82px) scaleX(0.9073);">CIO 2103.2</span>
<span class="t" style="left:1145px;top:1693px;font-size:13.3px;transform:translateX(0.45px) scaleX(0.9405);">CUI Policy.</span>
</p>
<span class="t" style="left:480px;top:1748px;font-size:21px;font-weight:700;color:#ffffff;transform:translateX(0.41px) scaleX(0.9436);">SAM.gov</span>
<p class="ln">
<span class="t" style="left:480px;top:1779px;font-size:21px;font-weight:700;color:#ffffff;transform:translateX(0.13px) scaleX(0.9855);">An official</span>
<span class="t" style="left:584px;top:1779px;font-size:21px;font-weight:700;color:#ffffff;transform:translateX(0.85px) scaleX(1.0011);">website of the</span>
<span class="t" style="left:729px;top:1779px;font-size:21px;font-weight:700;color:#ffffff;transform:translateX(0.42px) scaleX(0.9946);">U.S. General</span>
<span class="t" style="left:857px;top:1779px;font-size:21px;font-weight:700;color:#ffffff;transform:translateX(0.75px) scaleX(0.9630);">Services</span>
<span class="t" style="left:945px;top:1779px;font-size:21px;font-weight:700;color:#ffffff;transform:translateX(0.87px) scaleX(1.0101);">Administration</span>
</p>
</footer>
</div>
</body>
</html>
